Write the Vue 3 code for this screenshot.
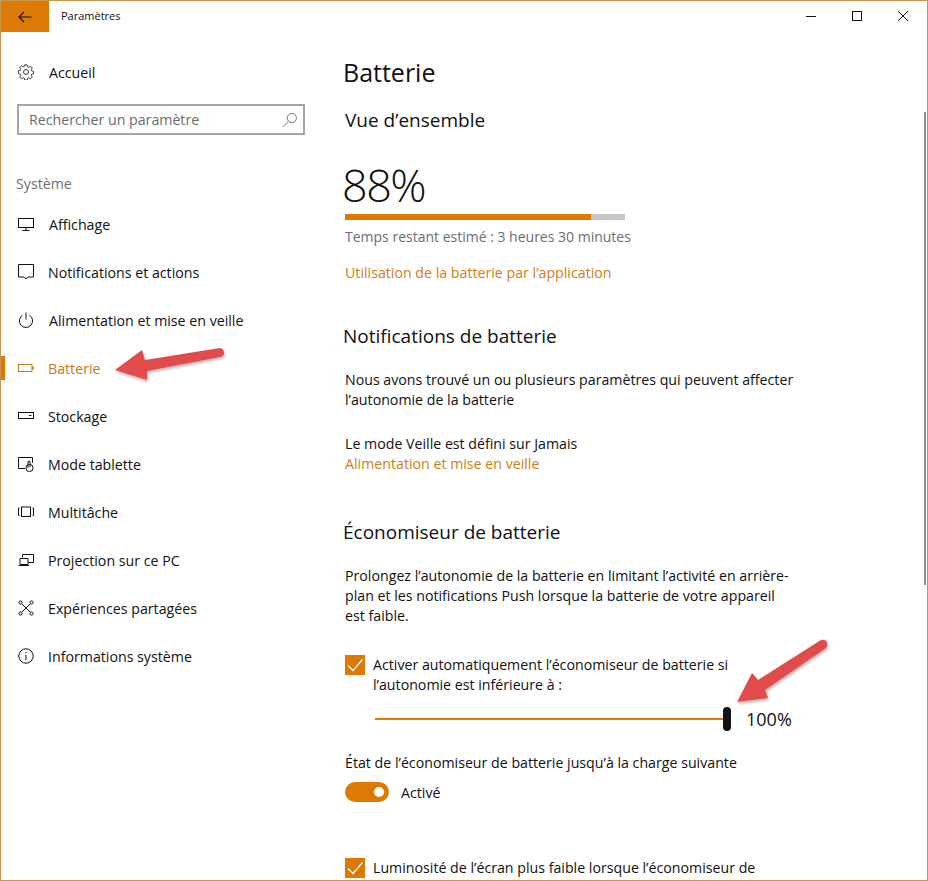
<script setup>
const navItems = [
  { label: 'Affichage', icon: 'display', wide: true },
  { label: 'Notifications et actions', icon: 'notif' },
  { label: 'Alimentation et mise en veille', icon: 'power', wide: true },
  { label: 'Batterie', icon: 'battery', active: true },
  { label: 'Stockage', icon: 'storage' },
  { label: 'Mode tablette', icon: 'tablet' },
  { label: 'Multitâche', icon: 'multi' },
  { label: 'Projection sur ce PC', icon: 'project' },
  { label: 'Expériences partagées', icon: 'shared' },
  { label: 'Informations système', icon: 'info' },
]
</script>

<template>
  <div class="window">
    <header class="titlebar">
      <div class="back">
        <svg width="14" height="12" viewBox="0 0 14 12" fill="none" stroke="#111" stroke-width="1.1">
          <path d="M13.5 6H1M6 1 1 6l5 5" />
        </svg>
      </div>
      <span class="app-title">Paramètres</span>
      <div class="controls">
        <svg width="12" height="12" viewBox="0 0 12 12" fill="none" stroke="#111"><path d="M1 6.5h10" /></svg>
        <svg width="12" height="12" viewBox="0 0 12 12" fill="none" stroke="#111"><rect x="1.5" y="1.5" width="9" height="9" /></svg>
        <svg width="12" height="12" viewBox="0 0 12 12" fill="none" stroke="#111"><path d="m1 1 10 10M11 1 1 11" /></svg>
      </div>
    </header>

    <div class="body">
      <aside class="sidebar">
        <div class="home">
          <svg class="icon" viewBox="0 0 18 18" fill="none" stroke="#222" stroke-width="1">
            <circle cx="9" cy="9" r="2.8" />
            <path d="M7.6 1h2.8l.4 2.2 1.4.6 1.9-1.3 2 2-1.3 1.9.6 1.4 2.1.4v2.8l-2.1.4-.6 1.4 1.3 1.9-2 2-1.9-1.3-1.4.6-.4 2.1H7.6l-.4-2.1-1.4-.6-1.9 1.3-2-2 1.3-1.9-.6-1.4L.5 10.4V7.6l2.1-.4.6-1.4-1.3-1.9 2-2 1.9 1.3 1.4-.6z" />
          </svg>
          <span>Accueil</span>
        </div>

        <div class="search">
          <span>Rechercher un paramètre</span>
          <svg width="16" height="16" viewBox="0 0 16 16" fill="none" stroke="#777" stroke-width="1">
            <circle cx="9.8" cy="6" r="4.6" />
            <path d="M6.4 9.4 1.2 14.6" />
          </svg>
        </div>

        <div class="group">Système</div>

        <nav class="nav">
          <div v-for="item in navItems" :key="item.label" class="nav-item" :class="{ active: item.active, wide: item.wide }">
            <svg class="icon" viewBox="0 0 16 16" fill="none" stroke="currentColor" stroke-width="1">
              <template v-if="item.icon === 'display'">
                <rect x="0.5" y="2.5" width="15" height="9" /><path d="M8 11.5v3M4.5 14.5h7" />
              </template>
              <template v-else-if="item.icon === 'notif'">
                <path d="M.5 .5h15v12.5H10L8 15l-2-2H.5z" />
              </template>
              <template v-else-if="item.icon === 'power'">
                <path d="M8 .5v7M4.6 3.2a6.6 6.6 0 1 0 6.8 0" />
              </template>
              <template v-else-if="item.icon === 'battery'">
                <rect x="0.5" y="4.5" width="13.5" height="7" /><path d="M14 7h1.5v2H14" />
              </template>
              <template v-else-if="item.icon === 'storage'">
                <rect x="0.5" y="4.5" width="15" height="6" /><path d="M11 7.5h2.5" />
              </template>
              <template v-else-if="item.icon === 'tablet'">
                <path d="M7 12.5H.5v-11h14V7" /><circle cx="11.5" cy="12" r="3.6" /><path d="M10 12V5.5q1-1 2 0V11" />
              </template>
              <template v-else-if="item.icon === 'multi'">
                <rect x="3.5" y="3" width="9" height="9.5" /><path d="M1.5 4H.5v7.5h1M14.5 4h1v7.5h-1" />
              </template>
              <template v-else-if="item.icon === 'project'">
                <path d="M4.5 5.5v-3h11v8H10" /><path d="M2 6.5h8v6H2z" /><path d="M.5 13.5H11" />
              </template>
              <template v-else-if="item.icon === 'shared'">
                <circle cx="2.5" cy="2.5" r="1.6" /><circle cx="13.5" cy="2.5" r="1.6" /><circle cx="2.5" cy="13.5" r="1.6" /><circle cx="13.5" cy="13.5" r="1.6" />
                <path d="m4 4 8 8M12 4l-8 8" />
              </template>
              <template v-else>
                <circle cx="8" cy="8" r="7.2" /><path d="M8 7v5M8 4v1.4" />
              </template>
            </svg>
            <span>{{ item.label }}</span>
          </div>
        </nav>
      </aside>

      <main class="main">
        <h1>Batterie</h1>
        <h2 class="overview">Vue d’ensemble</h2>
        <div class="percent">88%</div>
        <div class="bar"><div class="fill" style="width: 88%"></div></div>
        <p class="muted">Temps restant estimé : 3 heures 30 minutes</p>
        <a class="link usage">Utilisation de la batterie par l’application</a>

        <h2 class="section notif-head">Notifications de batterie</h2>
        <p class="para">Nous avons trouvé un ou plusieurs paramètres qui peuvent affecter<br />l’autonomie de la batterie</p>
        <p class="para sleep">Le mode Veille est défini sur Jamais</p>
        <a class="link">Alimentation et mise en veille</a>

        <h2 class="section saver-head">Économiseur de batterie</h2>
        <p class="para">Prolongez l’autonomie de la batterie en limitant l’activité en arrière-<br />plan et les notifications Push lorsque la batterie de votre appareil<br />est faible.</p>

        <div class="check first">
          <span class="box"><svg width="20" height="20" viewBox="0 0 20 20" fill="none" stroke="#fff" stroke-width="1.2"><path d="m3 10.5 5 5 9.5-11" /></svg></span>
          <span>Activer automatiquement l’économiseur de batterie si<br />l’autonomie est inférieure à :</span>
        </div>

        <div class="slider-row">
          <div class="track"></div>
          <div class="thumb"></div>
          <span class="value">100%</span>
        </div>

        <p class="para state">État de l’économiseur de batterie jusqu’à la charge suivante</p>
        <div class="toggle-row">
          <span class="toggle"><span class="knob"></span></span>
          <span>Activé</span>
        </div>

        <div class="check last">
          <span class="box"><svg width="20" height="20" viewBox="0 0 20 20" fill="none" stroke="#fff" stroke-width="1.2"><path d="m3 10.5 5 5 9.5-11" /></svg></span>
          <span>Luminosité de l’écran plus faible lorsque l’économiseur de</span>
        </div>
      </main>
    </div>

    <div class="scrollbar"></div>

    <svg class="arrows" width="928" height="881" viewBox="0 0 928 881">
      <defs>
        <filter id="shadow" x="-20%" y="-20%" width="140%" height="140%">
          <feDropShadow dx="1" dy="2" stdDeviation="1.5" flood-color="#000" flood-opacity="0.3" />
        </filter>
      </defs>
      <g filter="url(#shadow)" fill="#e14b4b">
        <path d="M115 370 142 350 145 360 220 348Q224 349 224 353 224 356 220 357L147 371 147 380Z" />
        <path d="M737 702 752 673 758 680 821 640Q825 639 827 642 828 645 826 648L765 690 768 698Z" />
      </g>
    </svg>
  </div>
</template>

<style>
html, body { margin: 0; background: #fff; }
</style>

<style scoped>
.window {
  position: relative;
  width: 928px;
  height: 881px;
  box-sizing: border-box;
  border: 1px solid #c8964a;
  overflow: hidden;
  background: #fff;
  color: #111;
  font-family: "Open Sans", "Noto Sans", sans-serif;
  font-size: 14.2px;
}
.titlebar { display: flex; align-items: center; height: 31px; }
.back {
  width: 48px; height: 31px; background: #dc7a05;
  display: flex; align-items: center; justify-content: center;
}
.app-title { margin-left: 12px; font-size: 11px; margin-bottom: 2px; }
.controls { margin-left: auto; display: flex; width: 122px; margin-bottom: 2px; }
.controls svg { flex: 0 0 12px; margin-right: 34px; }
.body { display: flex; }
.sidebar { width: 320px; flex: none; padding-top: 28px; box-sizing: border-box; }
.icon { width: 16px; height: 16px; flex: none; }
.home { display: flex; align-items: center; gap: 15px; padding-left: 17px; height: 24px; }
.search {
  display: flex; align-items: center; justify-content: space-between;
  margin: 20px 0 0 16px; width: 288px; height: 31px; box-sizing: border-box;
  border: 2px solid #a5a5a5; padding: 0 5px 0 10px; color: #6b6b6b;
}
.group { margin: 39px 0 0 15px; color: #6f6f6f; line-height: 20px; }
.nav { margin-top: 6px; }
.nav-item {
  position: relative; display: flex; align-items: center; gap: 14px;
  padding-left: 17px; height: 48px;
}
.nav-item.wide { gap: 15px; }
.nav-item.active { color: #c9791c; }
.nav-item.active::before {
  content: ""; position: absolute; left: 0; top: 12px; width: 4px; height: 24px; background: #dc7a05;
}
.main { flex: 1; padding-left: 24px; min-width: 0; }
h1, h2, p { margin: 0; font-weight: 400; }
h1 { font-size: 25px; line-height: 32px; margin-top: 24px; margin-left: -2px; }
h2 { font-size: 19px; line-height: 26px; }
.overview { margin-top: 19px; }
.percent { font-size: 45px; font-weight: 300; letter-spacing: -1.5px; line-height: 56px; margin: 24px 0 0 -3px; }
.bar { width: 280px; height: 6px; background: #c6c6c6; margin-top: 1px; }
.fill { height: 100%; background: #dc7a05; }
.muted { color: #6d6d6d; font-size: 14px; line-height: 20px; margin-top: 7px; }
.link { display: block; color: #d07d14; line-height: 20px; }
.usage { margin-top: 16px; }
.section { margin-left: -2px; }
.notif-head { margin-top: 40px; }
.para { line-height: 20px; }
.notif-head + .para { margin-top: 21px; }
.sleep { margin-top: 24px; }
.saver-head { margin-top: 45px; }
.saver-head + .para { margin-top: 21px; }
.check { display: flex; gap: 8px; line-height: 20px; }
.box {
  width: 20px; height: 20px; flex: none; background: #dc7a05; display: block;
}
.box svg { display: block; }
.first { margin-top: 29px; }
.slider-row { position: relative; display: flex; align-items: center; height: 24px; margin-top: 12px; }
.track { width: 349px; height: 2px; margin-left: 30px; background: #dc7a05; }
.thumb { width: 8px; height: 24px; border-radius: 4px; background: #111; margin-left: -1px; flex: none; }
.value { margin-left: 15px; font-size: 18px; }
.state { margin-top: 22px; }
.toggle-row { display: flex; align-items: center; gap: 12px; margin-top: 9px; height: 20px; }
.toggle {
  position: relative; display: block; width: 44px; height: 20px; border-radius: 10px; background: #dc7a05;
}
.knob {
  position: absolute; right: 5px; top: 5px; width: 10px; height: 10px; border-radius: 50%; background: #fff;
}
.last { margin-top: 56px; }
.scrollbar {
  position: absolute; right: 1px; top: 111px; width: 2px; height: 473px; background: #8f8f8f;
}
.arrows { position: absolute; left: -1px; top: -1px; pointer-events: none; }
</style>
